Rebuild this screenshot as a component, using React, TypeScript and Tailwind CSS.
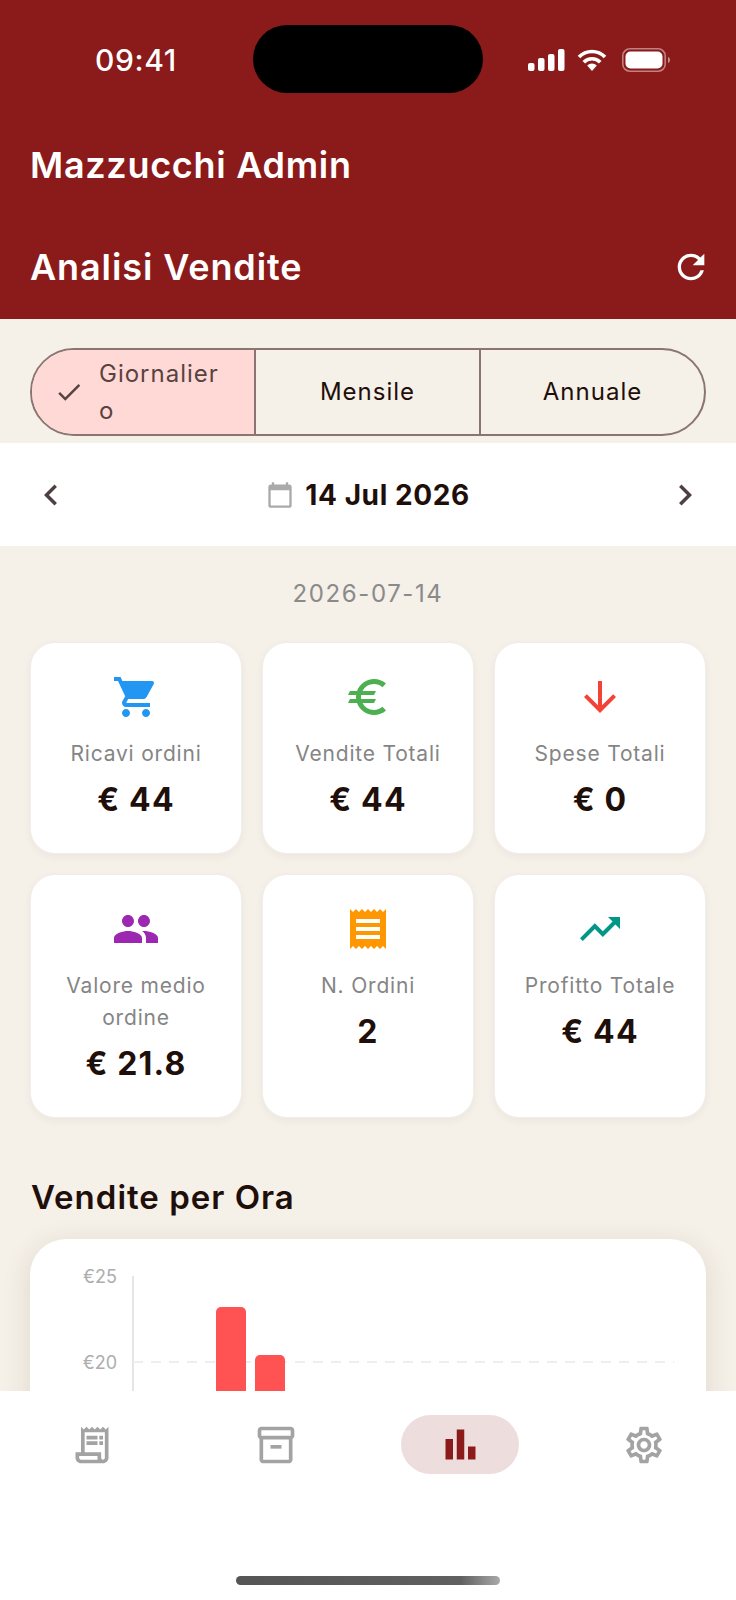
import {
  MdArrowDownward,
  MdBarChart,
  MdCalendarToday,
  MdCheck,
  MdChevronLeft,
  MdChevronRight,
  MdEuro,
  MdOutlineInventory2,
  MdOutlineReceiptLong,
  MdOutlineSettings,
  MdPeople,
  MdReceipt,
  MdRefresh,
  MdShoppingCart,
  MdTrendingUp,
} from "react-icons/md";
import type { ReactNode } from "react";

const stats: { icon: ReactNode; label: string; value: string }[] = [
  { icon: <MdShoppingCart size={48} className="text-[#2196f3]" />, label: "Ricavi ordini", value: "€ 44" },
  { icon: <MdEuro size={48} className="text-[#4caf50]" />, label: "Vendite Totali", value: "€ 44" },
  { icon: <MdArrowDownward size={48} className="text-[#f44336]" />, label: "Spese Totali", value: "€ 0" },
  { icon: <MdPeople size={48} className="text-[#9c27b0]" />, label: "Valore medio ordine", value: "€ 21.8" },
  { icon: <MdReceipt size={48} className="text-[#ff9800]" />, label: "N. Ordini", value: "2" },
  { icon: <MdTrendingUp size={48} className="text-[#009688]" />, label: "Profitto Totale", value: "€ 44" },
];

const StatusBar = () => (
  <div className="flex relative items-center justify-between h-[120px] pl-[95px] pr-[65px]">
    <span className="text-[30px] font-medium leading-none tracking-[0.6px] text-white">09:41</span>
    <div className="absolute left-[253px] top-[25px] w-[230px] h-[68px] bg-black rounded-[34px]" />
    <svg width="143" height="24" viewBox="0 0 143 24" fill="none">
      <g fill="#fff">
        <rect x="0" y="15" width="6.5" height="8" rx="2" />
        <rect x="10" y="10" width="6.5" height="13" rx="2" />
        <rect x="20" y="6" width="6.5" height="17" rx="2" />
        <rect x="30" y="1" width="6.5" height="22" rx="2" />
        <path d="M64 23l-4.8-5.4a6.8 6.8 0 0 1 9.6 0z" />
      </g>
      <path d="M51 9a18 18 0 0 1 26 0M55.8 14.2a11.4 11.4 0 0 1 16.4 0" stroke="#fff" strokeWidth="3.6" />
      <rect x="94.8" y="0.8" width="42.4" height="22.4" rx="7" stroke="#fff" strokeOpacity="0.45" strokeWidth="1.6" />
      <rect x="97.5" y="3.5" width="37" height="17" rx="5" fill="#fff" />
      <path d="M140 9c1.5 .6 2 1.8 2 3s-.5 2.4-2 3z" fill="#fff" fillOpacity="0.5" />
    </svg>
  </div>
);

const StatCard = (props: { icon: ReactNode; label: string; value: string }) => (
  <div className="flex flex-col items-center px-2 pt-[30px] pb-[33px] text-center bg-white rounded-[24px] shadow-[0_0_0_1px_#f0eeea,0_3px_10px_rgba(90,70,40,0.06)]">
    <div className="h-12">{props.icon}</div>
    <p className="mt-[17px] text-[21px] leading-[32px] tracking-[0.8px] text-[#858585]">{props.label}</p>
    <p className="mt-[10px] text-[32px] font-bold leading-[40px] tracking-[1.2px] text-[#1f0f0a]">{props.value}</p>
  </div>
);

const HourChart = () => (
  <svg width="676" height="160" viewBox="0 0 676 160" className="block">
    <text x="87" y="44" textAnchor="end" fontSize="18" fill="#adadad" fontFamily="Inter">€25</text>
    <text x="87" y="130" textAnchor="end" fontSize="18" fill="#adadad" fontFamily="Inter">€20</text>
    <line x1="103" y1="37" x2="103" y2="160" stroke="#dddddd" strokeWidth="1.5" />
    <line x1="103" y1="123" x2="644" y2="123" stroke="#eeeeee" strokeWidth="2" strokeDasharray="10 8" />
    <path d="M186 160V73a5 5 0 0 1 5-5h20a5 5 0 0 1 5 5v87z" fill="#ff5252" />
    <path d="M225 160V121a5 5 0 0 1 5-5h20a5 5 0 0 1 5 5v39z" fill="#ff5252" />
  </svg>
);

export default function App() {
  return (
    <div className="flex flex-col h-[1600px] bg-[#f5f0e8] overflow-hidden font-['Inter',sans-serif]">
      <header className="h-[319px] bg-[#8b1a1a] text-white">
        <StatusBar />
        <div className="flex items-center h-[90px] px-[30px]">
          <h1 className="text-[36px] font-semibold tracking-[0.7px]">Mazzucchi Admin</h1>
        </div>
        <div className="flex justify-between items-center h-[104px] mt-[5px] pl-[30px] pr-[25px]">
          <h2 className="text-[36px] font-semibold tracking-[0.9px]">Analisi Vendite</h2>
          <MdRefresh size={40} />
        </div>
      </header>

      <main className="flex-1 min-h-0 overflow-hidden">
        <div className="px-[30px] pt-[29px] pb-[7px]">
          <div className="grid grid-cols-[222px_1fr_1fr] h-[88px] rounded-full border-2 border-[#8a7572] overflow-hidden">
            <div className="flex items-center pl-[22px] bg-[#ffd9d6] text-[#5a4240]">
              <MdCheck size={30} className="shrink-0" />
              <span className="ml-[15px] w-[128px] text-[24px] leading-[37px] tracking-[1px] break-all">Giornaliero</span>
            </div>
            <div className="flex justify-center items-center border-l-2 border-[#8a7572] text-[24px] tracking-[1px] text-[#1f0f0a]">Mensile</div>
            <div className="flex justify-center items-center border-l-2 border-[#8a7572] text-[24px] tracking-[1px] text-[#1f0f0a]">Annuale</div>
          </div>
        </div>

        <div className="flex justify-between items-center h-[103px] px-[30px] bg-white">
          <MdChevronLeft size={42} className="text-[#4e4040]" />
          <div className="flex items-center gap-[11px]">
            <MdCalendarToday size={28} className="text-[#aaaaaa]" />
            <span className="text-[28px] font-bold tracking-[0.6px] text-[#1f0f0a]">14 Jul 2026</span>
          </div>
          <MdChevronRight size={42} className="text-[#4e4040]" />
        </div>

        <p className="pt-[30px] pb-[32px] text-center text-[24px] leading-[35px] tracking-[1.6px] text-[#8a8a8a]">2026-07-14</p>

        <div className="grid grid-cols-3 gap-[22px] px-[31px]">
          {stats.map((s) => (
            <StatCard key={s.label} icon={s.icon} label={s.label} value={s.value} />
          ))}
        </div>

        <h3 className="mt-[60px] px-[31px] text-[33px] font-semibold leading-[40px] tracking-[1px] text-[#1f0f0a]">Vendite per Ora</h3>

        <div className="mx-[30px] mt-[22px] h-[300px] bg-white rounded-[36px] shadow-[0_6px_28px_rgba(90,70,40,0.14)]">
          <HourChart />
        </div>
      </main>

      <nav className="relative flex flex-col h-[209px] bg-white">
        <div className="grid grid-cols-4 pt-[24px]">
          <div className="flex justify-center items-center h-[59px]">
            <MdOutlineReceiptLong size={44} className="text-[#a3a3a3]" />
          </div>
          <div className="flex justify-center items-center h-[59px]">
            <MdOutlineInventory2 size={44} className="text-[#a3a3a3]" />
          </div>
          <div className="flex justify-center items-center h-[59px]">
            <div className="flex justify-center items-center w-[118px] h-[59px] rounded-full bg-[#eedddd]">
              <MdBarChart size={45} className="text-[#8b1a1a]" />
            </div>
          </div>
          <div className="flex justify-center items-center h-[59px]">
            <MdOutlineSettings size={44} className="text-[#a3a3a3]" />
          </div>
        </div>
        <div className="self-center mt-[102px] w-[264px] h-[9px] rounded-full bg-gradient-to-r from-[#555555] via-[#606060] via-85% to-[#aaaaaa]" />
      </nav>
    </div>
  );
}
